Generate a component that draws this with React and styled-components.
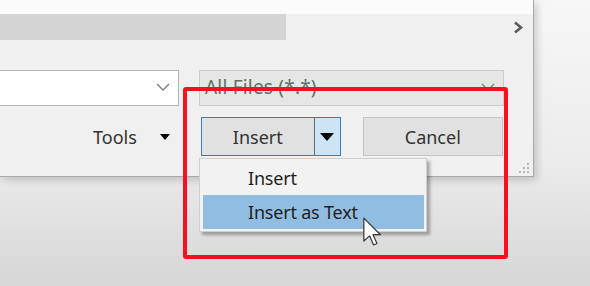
import React from "react";
import styled, { createGlobalStyle } from "styled-components";

const GlobalStyle = createGlobalStyle`
  html, body {
    margin: 0;
    padding: 0;
  }
  body {
    font-family: "Noto Sans", "Open Sans", sans-serif;
  }
`;

const Page = styled.div`
  position: relative;
  width: 590px;
  height: 286px;
  overflow: hidden;
  background: linear-gradient(to bottom, #f7f7f7 0%, #ececec 55%, #d6d6d6 100%);
`;

const Dialog = styled.div`
  display: flex;
  flex-direction: column;
  width: 533px;
  height: 176px;
  background: #f0f0f0;
  border-right: 1px solid #a9a9a9;
  border-bottom: 1px solid #a9a9a9;
  box-shadow: 3px 3px 8px rgba(0, 0, 0, 0.18);
  position: relative;
`;

const TopStrip = styled.div`
  height: 14px;
  background: #fbfbfb;
`;

const NavRow = styled.div`
  display: flex;
  align-items: center;
  justify-content: space-between;
  height: 26px;
  padding-right: 10px;
`;

const ScrollBar = styled.div`
  width: 286px;
  height: 26px;
  background: #d4d4d4;
`;

const ComboRow = styled.div`
  display: flex;
  gap: 20px;
  margin-top: 30px;
  height: 36px;
`;

const Combo = styled.div`
  display: flex;
  align-items: center;
  justify-content: space-between;
  box-sizing: border-box;
  width: ${(p) => p.$width}px;
  height: 36px;
  padding: 0 8px 2px 5px;
  background: ${(p) => (p.$disabled ? "#e6e6e6" : "#ffffff")};
  border: 1px solid ${(p) => (p.$disabled ? "#cccccc" : "#b4b4b4")};
  border-left: ${(p) => (p.$cut ? "none" : undefined)};
  color: #6a6a6a;
  font-size: 19px;
  letter-spacing: 0.2px;
`;

const ButtonRow = styled.div`
  display: flex;
  align-items: center;
  margin-top: 11px;
  padding-left: 93px;
  height: 39px;
`;

const ToolsLabel = styled.span`
  font-size: 18px;
  color: #333333;
`;

const Caret = styled.span`
  display: inline-block;
  width: 0;
  height: 0;
  border-left: ${(p) => p.$w / 2}px solid transparent;
  border-right: ${(p) => p.$w / 2}px solid transparent;
  border-top: ${(p) => p.$h}px solid #000;
`;

const ToolsCaret = styled(Caret)`
  margin-left: 23px;
  margin-top: 1px;
`;

const SplitButton = styled.div`
  display: flex;
  margin-left: 31px;
  width: 140px;
  height: 39px;
  box-sizing: border-box;
  border: 1px solid #3c7db6;
`;

const SplitMain = styled.div`
  flex: 1;
  display: flex;
  align-items: center;
  justify-content: center;
  background: #e1e1e1;
  border-right: 1px solid #5f6c78;
  font-size: 18px;
  color: #333333;
`;

const SplitArrow = styled.div`
  width: 25px;
  display: flex;
  align-items: center;
  justify-content: center;
  background: #cde4f6;
`;

const Button = styled.div`
  display: flex;
  align-items: center;
  justify-content: center;
  margin-left: 22px;
  width: 140px;
  height: 39px;
  box-sizing: border-box;
  background: #e1e1e1;
  border: 1px solid #c4c4c4;
  font-size: 18px;
  color: #333333;
`;

const Grip = styled.svg`
  position: absolute;
  right: 3px;
  bottom: 2px;
`;

const Menu = styled.div`
  position: absolute;
  left: 199px;
  top: 158px;
  width: 228px;
  box-sizing: border-box;
  padding: 2px 2px 2px 3px;
  background: #f2f2f2;
  border: 1px solid #cfcfcf;
  box-shadow: 3px 3px 3px rgba(0, 0, 0, 0.3);
`;

const MenuItem = styled.div`
  height: ${(p) => (p.$active ? 34 : 33)}px;
  margin-top: ${(p) => (p.$active ? 1 : 0)}px;
  display: flex;
  align-items: center;
  padding-left: 45px;
  font-size: 18px;
  letter-spacing: -0.2px;
  color: #1f1f1f;
  background: ${(p) => (p.$active ? "#91bde3" : "transparent")};
`;

const Highlight = styled.div`
  position: absolute;
  left: 183px;
  top: 87px;
  width: 325px;
  height: 172px;
  box-sizing: border-box;
  border: 4px solid #f8101e;
  border-radius: 3px;
  pointer-events: none;
`;

const Pointer = styled.svg`
  position: absolute;
  left: 361px;
  top: 217px;
`;

const ChevronDown = () => (
  <svg width="14" height="8" viewBox="0 0 14 8">
    <polyline points="1,1 7,7 13,1" fill="none" stroke="#7a7a7a" strokeWidth="1.3" />
  </svg>
);

export default function App() {
  return (
    <>
      <GlobalStyle />
      <Page>
        <Dialog>
          <TopStrip />
          <NavRow>
            <ScrollBar />
            <svg width="10" height="13" viewBox="0 0 10 13">
              <polyline points="2,1.5 8,6.5 2,11.5" fill="none" stroke="#5a5a5a" strokeWidth="2.6" />
            </svg>
          </NavRow>
          <ComboRow>
            <Combo $width={179} $cut>
              <span />
              <ChevronDown />
            </Combo>
            <Combo $width={305} $disabled>
              <span>All Files (*.*)</span>
              <ChevronDown />
            </Combo>
          </ComboRow>
          <ButtonRow>
            <ToolsLabel>Tools</ToolsLabel>
            <ToolsCaret $w={11} $h={6} />
            <SplitButton>
              <SplitMain>Insert</SplitMain>
              <SplitArrow>
                <Caret $w={15} $h={8} />
              </SplitArrow>
            </SplitButton>
            <Button>Cancel</Button>
          </ButtonRow>
          <Grip width="12" height="12" viewBox="0 0 12 12">
            <rect x="9" y="1" width="2" height="2" fill="#b8b8b8" />
            <rect x="5" y="5" width="2" height="2" fill="#b8b8b8" />
            <rect x="9" y="5" width="2" height="2" fill="#b8b8b8" />
            <rect x="1" y="9" width="2" height="2" fill="#b8b8b8" />
            <rect x="5" y="9" width="2" height="2" fill="#b8b8b8" />
            <rect x="9" y="9" width="2" height="2" fill="#b8b8b8" />
          </Grip>
        </Dialog>

        <Menu>
          <MenuItem>Insert</MenuItem>
          <MenuItem $active>Insert as Text</MenuItem>
        </Menu>

        <Highlight />

        <Pointer width="24" height="32" viewBox="0 0 20 28">
          <path
            d="M2 1 L2 21 L7 16.5 L10.5 24.5 L13.5 23.2 L10 15.5 L16.5 15.5 Z"
            fill="#ffffff"
            stroke="#3a3a3a"
            strokeWidth="1.1"
            strokeLinejoin="round"
          />
        </Pointer>
      </Page>
    </>
  );
}
